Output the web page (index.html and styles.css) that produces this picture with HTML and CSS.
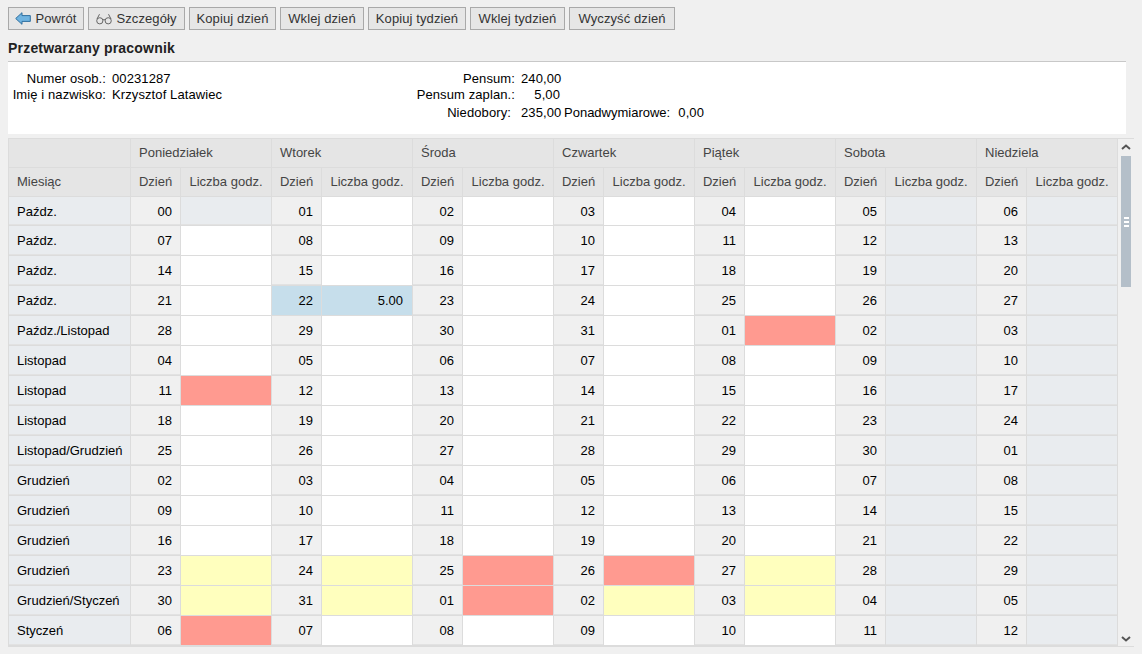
FILE: index.html
```html
<!DOCTYPE html>
<html lang="pl">
<head>
    <meta charset="UTF-8">
    <title>Przetwarzany pracownik</title>
    <link rel="stylesheet" href="styles.css">
</head>
<body>
    <div class="toolbar">
        <button type="button" class="btn btn-back">
            <svg class="btn-icon" width="16" height="13" viewBox="0 0 16 13"><path d="M0.7 6.5 L7 0.7 V3.6 H15.3 V9.4 H7 V12.3 Z" fill="#6fb3e0" stroke="#2f6f9f" stroke-width="1"/></svg>
            Powrót
        </button>
        <button type="button" class="btn btn-details">
            <svg class="btn-icon" width="16" height="12" viewBox="0 0 16 12"><g fill="none" stroke="#666" stroke-width="1"><circle cx="3.8" cy="7.8" r="3.1"/><circle cx="12.2" cy="7.8" r="3.1"/><path d="M6.9 7 Q8 6 9.1 7"/><path d="M1 6 L3.5 1.2 M15 6 L12.5 1.2"/></g></svg>
            Szczegóły
        </button>
        <button type="button" class="btn btn-copy-day">Kopiuj dzień</button>
        <button type="button" class="btn btn-paste-day">Wklej dzień</button>
        <button type="button" class="btn btn-copy-week">Kopiuj tydzień</button>
        <button type="button" class="btn btn-paste-week">Wklej tydzień</button>
        <button type="button" class="btn btn-clear">Wyczyść dzień</button>
    </div>

    <h2 class="section-title">Przetwarzany pracownik</h2>

    <div class="info-panel">
        <div class="info-left">
            <span class="lbl">Numer osob.:</span><span>00231287</span>
            <span class="lbl">Imię i nazwisko:</span><span>Krzysztof Latawiec</span>
        </div>
        <div class="info-right">
            <span class="lbl">Pensum:</span><span class="num">240,00</span><span></span><span></span>
            <span class="lbl">Pensum zaplan.:</span><span class="num">5,00</span><span></span><span></span>
            <span class="lbl lbl-low">Niedobory:</span><span class="num num-low">235,00</span><span class="lbl-low">Ponadwymiarowe:</span><span class="num num-low">0,00</span>
        </div>
    </div>

    <div class="grid-wrap">
        <table class="cal">
            <colgroup>
                <col class="c-month">
                <col class="c-day"><col class="c-hours">
                <col class="c-day"><col class="c-hours">
                <col class="c-day"><col class="c-hours">
                <col class="c-day"><col class="c-hours">
                <col class="c-day"><col class="c-hours">
                <col class="c-day"><col class="c-hours">
                <col class="c-day"><col class="c-hours">
            </colgroup>
            <thead>
                <tr class="head-1">
                    <th></th>
                    <th colspan="2">Poniedziałek</th>
                    <th colspan="2">Wtorek</th>
                    <th colspan="2">Środa</th>
                    <th colspan="2">Czwartek</th>
                    <th colspan="2">Piątek</th>
                    <th colspan="2">Sobota</th>
                    <th colspan="2">Niedziela</th>
                </tr>
                <tr class="head-2">
                    <th>Miesiąc</th>
                    <th>Dzień</th><th>Liczba godz.</th>
                    <th>Dzień</th><th>Liczba godz.</th>
                    <th>Dzień</th><th>Liczba godz.</th>
                    <th>Dzień</th><th>Liczba godz.</th>
                    <th>Dzień</th><th>Liczba godz.</th>
                    <th>Dzień</th><th>Liczba godz.</th>
                    <th>Dzień</th><th>Liczba godz.</th>
                </tr>
            </thead>
            <tbody>
                <tr class="first">
                    <td class="month">Paźdz.</td>
                    <td class="day">00</td><td class="off"></td>
                    <td class="day">01</td><td></td>
                    <td class="day">02</td><td></td>
                    <td class="day">03</td><td></td>
                    <td class="day">04</td><td></td>
                    <td class="day">05</td><td class="off"></td>
                    <td class="day">06</td><td class="off"></td>
                </tr>
                <tr>
                    <td class="month">Paźdz.</td>
                    <td class="day">07</td><td></td>
                    <td class="day">08</td><td></td>
                    <td class="day">09</td><td></td>
                    <td class="day">10</td><td></td>
                    <td class="day">11</td><td></td>
                    <td class="day">12</td><td class="off"></td>
                    <td class="day">13</td><td class="off"></td>
                </tr>
                <tr>
                    <td class="month">Paźdz.</td>
                    <td class="day">14</td><td></td>
                    <td class="day">15</td><td></td>
                    <td class="day">16</td><td></td>
                    <td class="day">17</td><td></td>
                    <td class="day">18</td><td></td>
                    <td class="day">19</td><td class="off"></td>
                    <td class="day">20</td><td class="off"></td>
                </tr>
                <tr>
                    <td class="month">Paźdz.</td>
                    <td class="day">21</td><td></td>
                    <td class="day sel">22</td><td class="sel hours">5.00</td>
                    <td class="day">23</td><td></td>
                    <td class="day">24</td><td></td>
                    <td class="day">25</td><td></td>
                    <td class="day">26</td><td class="off"></td>
                    <td class="day">27</td><td class="off"></td>
                </tr>
                <tr>
                    <td class="month">Paźdz./Listopad</td>
                    <td class="day">28</td><td></td>
                    <td class="day">29</td><td></td>
                    <td class="day">30</td><td></td>
                    <td class="day">31</td><td></td>
                    <td class="day">01</td><td class="red"></td>
                    <td class="day">02</td><td class="off"></td>
                    <td class="day">03</td><td class="off"></td>
                </tr>
                <tr>
                    <td class="month">Listopad</td>
                    <td class="day">04</td><td></td>
                    <td class="day">05</td><td></td>
                    <td class="day">06</td><td></td>
                    <td class="day">07</td><td></td>
                    <td class="day">08</td><td></td>
                    <td class="day">09</td><td class="off"></td>
                    <td class="day">10</td><td class="off"></td>
                </tr>
                <tr>
                    <td class="month">Listopad</td>
                    <td class="day">11</td><td class="red"></td>
                    <td class="day">12</td><td></td>
                    <td class="day">13</td><td></td>
                    <td class="day">14</td><td></td>
                    <td class="day">15</td><td></td>
                    <td class="day">16</td><td class="off"></td>
                    <td class="day">17</td><td class="off"></td>
                </tr>
                <tr>
                    <td class="month">Listopad</td>
                    <td class="day">18</td><td></td>
                    <td class="day">19</td><td></td>
                    <td class="day">20</td><td></td>
                    <td class="day">21</td><td></td>
                    <td class="day">22</td><td></td>
                    <td class="day">23</td><td class="off"></td>
                    <td class="day">24</td><td class="off"></td>
                </tr>
                <tr>
                    <td class="month">Listopad/Grudzień</td>
                    <td class="day">25</td><td></td>
                    <td class="day">26</td><td></td>
                    <td class="day">27</td><td></td>
                    <td class="day">28</td><td></td>
                    <td class="day">29</td><td></td>
                    <td class="day">30</td><td class="off"></td>
                    <td class="day">01</td><td class="off"></td>
                </tr>
                <tr>
                    <td class="month">Grudzień</td>
                    <td class="day">02</td><td></td>
                    <td class="day">03</td><td></td>
                    <td class="day">04</td><td></td>
                    <td class="day">05</td><td></td>
                    <td class="day">06</td><td></td>
                    <td class="day">07</td><td class="off"></td>
                    <td class="day">08</td><td class="off"></td>
                </tr>
                <tr>
                    <td class="month">Grudzień</td>
                    <td class="day">09</td><td></td>
                    <td class="day">10</td><td></td>
                    <td class="day">11</td><td></td>
                    <td class="day">12</td><td></td>
                    <td class="day">13</td><td></td>
                    <td class="day">14</td><td class="off"></td>
                    <td class="day">15</td><td class="off"></td>
                </tr>
                <tr>
                    <td class="month">Grudzień</td>
                    <td class="day">16</td><td></td>
                    <td class="day">17</td><td></td>
                    <td class="day">18</td><td></td>
                    <td class="day">19</td><td></td>
                    <td class="day">20</td><td></td>
                    <td class="day">21</td><td class="off"></td>
                    <td class="day">22</td><td class="off"></td>
                </tr>
                <tr>
                    <td class="month">Grudzień</td>
                    <td class="day">23</td><td class="yellow"></td>
                    <td class="day">24</td><td class="yellow"></td>
                    <td class="day">25</td><td class="red"></td>
                    <td class="day">26</td><td class="red"></td>
                    <td class="day">27</td><td class="yellow"></td>
                    <td class="day">28</td><td class="off"></td>
                    <td class="day">29</td><td class="off"></td>
                </tr>
                <tr>
                    <td class="month">Grudzień/Styczeń</td>
                    <td class="day">30</td><td class="yellow"></td>
                    <td class="day">31</td><td class="yellow"></td>
                    <td class="day">01</td><td class="red"></td>
                    <td class="day">02</td><td class="yellow"></td>
                    <td class="day">03</td><td class="yellow"></td>
                    <td class="day">04</td><td class="off"></td>
                    <td class="day">05</td><td class="off"></td>
                </tr>
                <tr>
                    <td class="month">Styczeń</td>
                    <td class="day">06</td><td class="red"></td>
                    <td class="day">07</td><td></td>
                    <td class="day">08</td><td></td>
                    <td class="day">09</td><td></td>
                    <td class="day">10</td><td></td>
                    <td class="day">11</td><td class="off"></td>
                    <td class="day">12</td><td class="off"></td>
                </tr>
            </tbody>
        </table>
        <div class="scrollbar">
            <svg class="arrow" width="10" height="6" viewBox="0 0 10 6"><path d="M1 5 L5 1.5 L9 5" fill="none" stroke="#555" stroke-width="2"/></svg>
            <div class="track">
                <div class="thumb"><span class="grip"></span></div>
            </div>
            <svg class="arrow" width="10" height="6" viewBox="0 0 10 6"><path d="M1 1 L5 4.5 L9 1" fill="none" stroke="#555" stroke-width="2"/></svg>
        </div>
    </div>
</body>
</html>
```

FILE: styles.css
```css
html, body {
    height: 100%;
}

body {
    margin: 0;
    padding: 7px 8px 0;
    box-sizing: border-box;
    background-color: #f0f0f0;
    font-family: "Liberation Sans", Arial, sans-serif;
    font-size: 13px;
    letter-spacing: 0.1px;
    color: #000;
    overflow: hidden;
}

/* toolbar */
.toolbar {
    display: flex;
    gap: 4px;
    height: 23px;
}

.btn {
    display: flex;
    align-items: center;
    justify-content: center;
    gap: 4px;
    height: 23px;
    padding: 0;
    border: 1px solid #a9a9a9;
    background-color: #e6e6e6;
    font-family: inherit;
    font-size: 13px;
    letter-spacing: inherit;
    color: #333;
}

.btn-back { width: 76px; }
.btn-details { width: 97px; }
.btn-copy-day { width: 87px; }
.btn-paste-day { width: 84px; }
.btn-copy-week { width: 98px; }
.btn-paste-week { width: 95px; }
.btn-clear { width: 106px; }

.section-title {
    margin: 10px 0 0;
    height: 21px;
    font-size: 14px;
    letter-spacing: 0.2px;
    line-height: 17px;
    font-weight: bold;
    color: #222;
}

/* employee info */
.info-panel {
    display: flex;
    padding-top: 9px;
    height: 63px;
    background-color: #fff;
    border-top: 1px solid #c8c8c8;
    margin-right: 8px;
    margin-bottom: 4px;
}

.info-left {
    display: grid;
    grid-template-columns: 98px auto;
    grid-auto-rows: 16px;
    column-gap: 6px;
    line-height: 16px;
    width: 400px;
}

.info-right {
    display: grid;
    grid-template-columns: 107px 39px 106px 26px;
    grid-template-rows: 16px 16px 18px;
    column-gap: 6px;
    line-height: 16px;
}

.lbl {
    text-align: right;
    white-space: nowrap;
}

.num {
    text-align: right;
}

.lbl-low,
.num-low {
    padding-top: 2px;
}

.info-right .lbl-low:not(.lbl) {
    margin-left: -2px;
    letter-spacing: 0;
}

.info-right .lbl-low.lbl {
    padding-right: 4px;
}

/* calendar */
.grid-wrap {
    display: flex;
    width: 1126px;
    height: 508px;
    overflow: hidden;
    border-bottom: 1px solid #dcdcdc;
}

.cal {
    border-collapse: collapse;
    table-layout: fixed;
    width: 1109px;
    height: 508px;
    flex: none;
    letter-spacing: 0;
}

.c-month { width: 122px; }
.c-day { width: 50px; }
.c-hours { width: 91px; }

.cal th,
.cal td {
    padding: 0 8px;
    border: 1px solid #dcdcdc;
    white-space: nowrap;
    overflow: hidden;
}

.cal th {
    background-color: #e5e5e5;
    font-weight: normal;
    text-align: left;
    color: #444;
    padding-bottom: 2px;
}

.head-1 th { height: 26px; }
.head-2 th { height: 26px; }
.head-2 th:not(:first-child) { text-align: center; padding: 0 0 2px; }

.cal tbody tr { height: 30px; }
.cal tbody tr.first { height: 29px; }

.cal td { background-color: #fff; }
.cal td.month { background-color: #e9ecef; box-shadow: inset 0 -1px 0 #e2e2e2; }
.cal td.day {
    background-color: #f0f0f0;
    text-align: right;
    padding: 0 8px 0 0;
    box-shadow: inset 0 -1px 0 #e2e2e2;
}
.cal td.off { background-color: #e9ecef; box-shadow: inset 0 -1px 0 #e2e2e2; }
.cal td.red { background-color: #ff9a90; }
.cal td.yellow { background-color: #ffffbe; }
.cal td.sel { background-color: #c6deeb; box-shadow: none; }
.cal td.hours { text-align: right; padding-right: 9px; }

/* scrollbar */
.scrollbar {
    flex: none;
    width: 17px;
    display: flex;
    flex-direction: column;
    align-items: center;
    padding: 5px 0 4px;
    box-sizing: border-box;
    border-top: 1px solid #dcdcdc;
    border-right: 1px solid #dcdcdc;
}

.track {
    flex: 1;
    width: 100%;
    padding: 6px 0 0 0;
    display: flex;
    justify-content: center;
}

.thumb {
    width: 10px;
    height: 131px;
    background-color: #b4bfc9;
    display: flex;
    align-items: center;
    justify-content: center;
}

.grip {
    width: 5px;
    height: 10px;
    background: repeating-linear-gradient(#fff 0 2px, transparent 2px 4px);
}
```
